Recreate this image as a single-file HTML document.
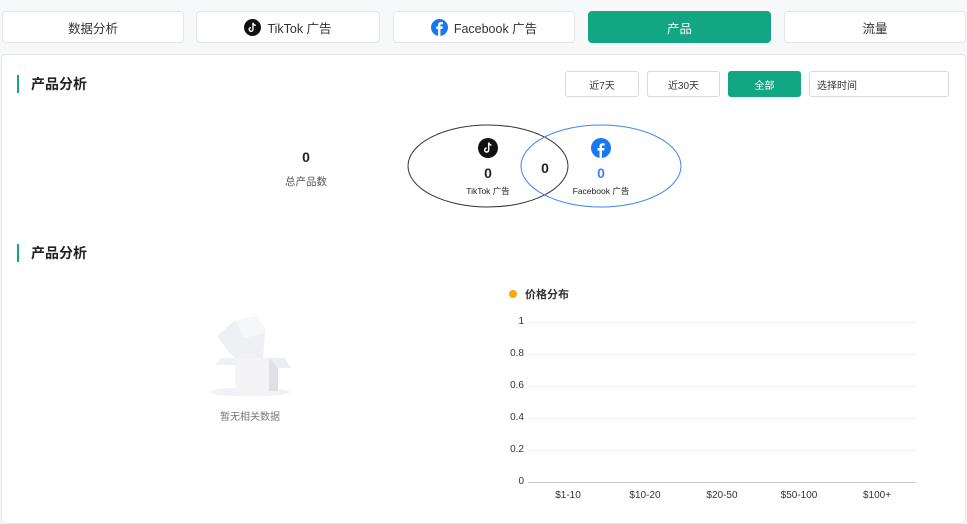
<!DOCTYPE html>
<html><head><meta charset="utf-8"><style>
*{margin:0;padding:0;box-sizing:border-box}
body{width:967px;height:519px;overflow:hidden;background:#f7f8fa;font-family:"Liberation Sans","Noto Sans CJK SC",sans-serif;color:#222;position:relative}
.a{position:absolute}
.tab{position:absolute;top:11px;height:32px;background:#fff;border:1px solid #e3e5e8;border-radius:4px;display:flex;align-items:center;justify-content:center;font-size:12.5px;color:#333;gap:6px}
.tab.on{background:#12a683;border-color:#12a683;color:#fff}
.panel{position:absolute;left:1px;top:54px;width:965px;height:470px;background:#fff;border:1px solid #e3e5e8;border-radius:4px}
.bar{position:absolute;width:2px;height:18px;background:#12a683}
.ttl{position:absolute;font-size:14px;font-weight:bold;color:#222}
.btn{position:absolute;top:71px;height:26px;border:1px solid #d8dadd;border-radius:3px;background:#fff;font-size:10px;display:flex;align-items:center;justify-content:center;color:#333}
.yl{position:absolute;left:490px;width:34px;text-align:right;font-size:10px;color:#333}
.gl{position:absolute;left:528px;width:388px;height:1px;background:#f0f0f0}
.xl{position:absolute;top:490px;width:60px;text-align:center;font-size:10px;color:#333}
</style></head><body>
<div class="tab" style="left:2px;width:182px">数据分析</div>
<div class="tab" style="left:196px;width:184px"><svg width="17" height="17" viewBox="0 0 18 18"><circle cx="9" cy="9" r="9" fill="#111"/><path d="M9.5 4v7a2 2 0 1 1-2-2M9.5 4c.3 1.6 1.5 2.6 3 2.7" stroke="#fff" stroke-width="1.5" fill="none"/></svg>TikTok 广告</div>
<div class="tab" style="left:393px;width:182px"><svg width="17" height="17" viewBox="0 0 18 18"><circle cx="9" cy="9" r="9" fill="#1877f2"/><path d="M10 18V10.5h2.2l.3-2.5H10V6.6c0-.7.3-1.1 1.2-1.1h1.4V3.3c-.4 0-1.1-.1-1.9-.1-2 0-3.2 1.1-3.2 3.2V8H5.5v2.5h2V18z" fill="#fff"/></svg>Facebook 广告</div>
<div class="tab on" style="left:588px;width:183px">产品</div>
<div class="tab" style="left:784px;width:182px">流量</div>
<div class="panel"></div>
<div class="bar" style="left:17px;top:75px"></div>
<div class="ttl" style="left:31px;top:74px">产品分析</div>
<div class="btn" style="left:565px;width:74px">近7天</div>
<div class="btn" style="left:647px;width:73px">近30天</div>
<div class="btn" style="left:728px;width:73px;background:#12a683;border-color:#12a683;color:#fff">全部</div>
<div class="btn" style="left:809px;width:140px;justify-content:flex-start;padding-left:7px">选择时间</div>
<div class="a" style="left:266px;top:149px;width:80px;text-align:center;font-size:14px;font-weight:bold">0</div>
<div class="a" style="left:266px;top:174px;width:80px;text-align:center;font-size:10.5px;color:#555">总产品数</div>
<svg class="a" style="left:0;top:0" width="967" height="519">
<ellipse cx="488" cy="166" rx="80" ry="41" fill="none" stroke="#333" stroke-width="1"/>
<ellipse cx="601" cy="166" rx="80" ry="41" fill="none" stroke="#3a86ef" stroke-width="1"/>
<circle cx="488" cy="148" r="10" fill="#111"/><path d="M488.7 142.5v7.5a2 2 0 1 1-2-2M488.7 142.5c.3 1.6 1.4 2.5 2.8 2.6" stroke="#fff" stroke-width="1.5" fill="none"/>
<circle cx="601" cy="148" r="10" fill="#1877f2"/><path d="M602 158V150.5h2.2l.3-2.5H602V146.6c0-.7.3-1.1 1.2-1.1h1.4V143.3c-.4 0-1.1-.1-1.9-.1-2 0-3.2 1.1-3.2 3.2V148h-2v2.5h2V158z" fill="#fff"/>
</svg>
<div class="a" style="left:468px;top:165px;width:40px;text-align:center;font-size:14px;font-weight:bold">0</div>
<div class="a" style="left:448px;top:185px;width:80px;text-align:center;font-size:8.5px">TikTok 广告</div>
<div class="a" style="left:525px;top:160px;width:40px;text-align:center;font-size:14px;font-weight:bold">0</div>
<div class="a" style="left:581px;top:165px;width:40px;text-align:center;font-size:14px;font-weight:bold;color:#3a86ef">0</div>
<div class="a" style="left:556px;top:185px;width:90px;text-align:center;font-size:8.5px">Facebook 广告</div>
<div class="bar" style="left:17px;top:244px"></div>
<div class="ttl" style="left:31px;top:243px">产品分析</div>
<svg class="a" style="left:205px;top:310px" width="90" height="90" viewBox="0 0 90 90">
<ellipse cx="45" cy="82" rx="40" ry="4.5" fill="#f1f2f5"/>
<path d="M12 26 L30 10 L52 6 L60 24 L58 48 L30 48 L22 40 Z" fill="#eef0f3"/>
<path d="M30 10 L52 6 L62 22 L40 28 Z" fill="#f6f7f9"/>
<rect x="30" y="48" width="34" height="33" fill="#f4f4f7"/>
<path d="M64 48 L64 81 L73 81 L73 58 Z" fill="#dfe0e5"/>
<path d="M64 48 L80 48 L86 58 L73 58 Z" fill="#eceef1"/>
<path d="M30 48 L16 48 L10 55 L30 55 Z" fill="#f0f1f4"/>
</svg>
<div class="a" style="left:200px;top:408px;width:100px;text-align:center;font-size:10px;color:#777">暂无相关数据</div>
<div class="a" style="left:509px;top:290px;width:8px;height:8px;border-radius:50%;background:#f5a70f"></div>
<div class="a" style="left:525px;top:286px;font-size:11px;font-weight:bold;color:#333">价格分布</div>
<div class="gl" style="top:322px"></div><div class="gl" style="top:354px"></div><div class="gl" style="top:386px"></div><div class="gl" style="top:418px"></div><div class="gl" style="top:450px"></div>
<div class="gl" style="top:482px;background:#ccc"></div>
<div class="yl" style="top:316px">1</div><div class="yl" style="top:348px">0.8</div><div class="yl" style="top:380px">0.6</div><div class="yl" style="top:412px">0.4</div><div class="yl" style="top:444px">0.2</div><div class="yl" style="top:476px">0</div>
<div class="xl" style="left:538px">$1-10</div><div class="xl" style="left:615px">$10-20</div><div class="xl" style="left:692px">$20-50</div><div class="xl" style="left:769px">$50-100</div><div class="xl" style="left:847px">$100+</div>
</body></html>
